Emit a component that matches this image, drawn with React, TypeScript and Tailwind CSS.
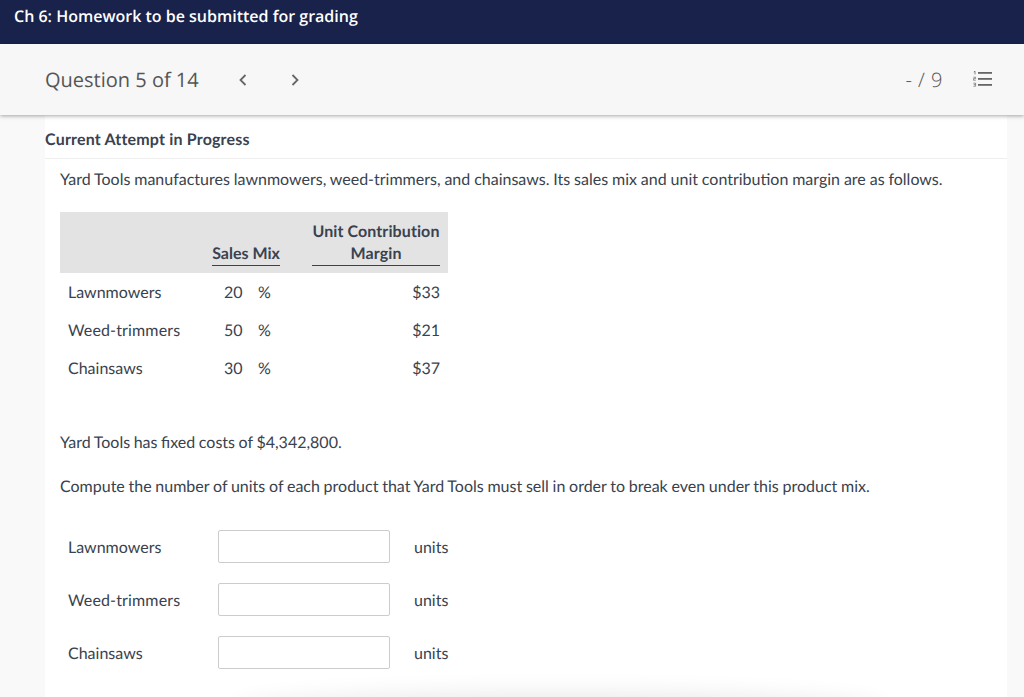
export default function App() {
  const rows = [
    ["Lawnmowers", "20", "$33", ""],
    ["Weed-trimmers", "50", "$21", "tracking-[0.15px]"],
    ["Chainsaws", "30", "$37", ""],
  ];
  return (
    <div className="relative h-[697px] w-[1024px] overflow-hidden bg-[#f9f9f9] font-['Lato',sans-serif] text-[16px] text-[#39424e] [text-rendering:geometricPrecision]">
      <header className="flex h-[44px] items-start bg-[#19224a] pl-[14px] pt-[5px] font-['Open_Sans',sans-serif] text-[16px] font-semibold leading-[22px] text-white">
        Ch 6: Homework to be submitted for grading
      </header>
      <div className="relative z-10 flex h-[71px] items-center bg-[#f7f7f7] pl-[45px] pr-[31px] font-['Open_Sans',sans-serif] text-[#555] shadow-[0_1px_4px_rgba(0,0,0,0.35)]">
        <span className="w-[193px] text-[20px]">Question 5 of 14</span>
        <svg width="10" height="14" viewBox="0 0 10 14" fill="none" stroke="#666" strokeWidth="1.8" className="mr-[42px]">
          <path d="M7.5 2 L2.5 7 L7.5 12" />
        </svg>
        <svg width="10" height="14" viewBox="0 0 10 14" fill="none" stroke="#666" strokeWidth="1.8">
          <path d="M2.5 2 L7.5 7 L2.5 12" />
        </svg>
        <span className="ml-auto text-[20px] font-light tracking-[0.5px]">- / 9</span>
        <svg width="20" height="16" viewBox="0 0 20 16" className="ml-[30px] mb-[1px]" fill="#666">
          <rect x="5" y="1" width="14" height="1.8" />
          <rect x="5" y="7" width="14" height="1.8" />
          <rect x="5" y="13" width="14" height="1.8" />
          <path d="M0.8 1 L2 0.2 V3.4" fill="none" stroke="#666" strokeWidth="0.8" />
          <path d="M0.4 6.2 H2.6 V7.6 H0.4 V9.2 H2.8" fill="none" stroke="#666" strokeWidth="0.7" />
          <path d="M0.4 12.2 H2.6 V13.6 H0.8 M2.6 13.6 V15.2 H0.4" fill="none" stroke="#666" strokeWidth="0.7" />
        </svg>
      </div>
      <main className="ml-[45px] mr-[17px] h-[582px] bg-white">
        <div className="flex h-[44px] items-end border-b border-[#eeeeee] pb-[8px] font-bold leading-[20px] tracking-[0.19px]">
          Current Attempt in Progress
        </div>
        <div className="pl-[15px]">
          <p className="mt-[11px] leading-[20px] [word-spacing:-0.23px]">
            Yard Tools manufactures lawnmowers, weed-trimmers, and chainsaws. Its sales mix and unit contribution margin are as follows.
          </p>
          <table className="mt-[22px] w-[388px] border-collapse">
            <thead>
              <tr className="h-[61px] bg-[#e3e3e3] font-bold">
                <th className="w-[152px]"></th>
                <th className="w-[68px] p-0 align-bottom">
                  <span className="mb-[7px] block border-b border-[#39424e] text-center font-bold leading-[22px]">Sales Mix</span>
                </th>
                <th className="w-[32px]"></th>
                <th className="w-[128px] p-0 align-bottom">
                  <span className="mb-[7px] block border-b border-[#39424e] text-center font-bold leading-[22px] tracking-[0.1px]">
                    Unit Contribution<br />Margin
                  </span>
                </th>
                <th className="w-[8px]"></th>
              </tr>
            </thead>
            <tbody>
              {rows.map((r) => (
                <tr key={r[0]} className="h-[38px]">
                  <td className={`pl-[8px] pt-[2px] pb-0 ${r[3]}`}>{r[0]}</td>
                  <td className="p-0 pl-[12px] pt-[2px]">
                    <span className="inline-block w-[34px]">{r[1]}</span>%
                  </td>
                  <td></td>
                  <td className="p-0 pt-[2px] text-right">{r[2]}</td>
                  <td></td>
                </tr>
              ))}
            </tbody>
          </table>
          <p className="mt-[46px] leading-[20px] [word-spacing:-0.5px]">Yard Tools has fixed costs of $4,342,800.</p>
          <p className="mt-[24px] leading-[20px] [word-spacing:-0.37px]">
            Compute the number of units of each product that Yard Tools must sell in order to break even under this product mix.
          </p>
          <div className="mt-[33px] flex flex-col gap-[20px]">
            {rows.map((r) => (
              <div key={r[0]} className="flex h-[33px] items-center pl-[8px]">
                <span className={`w-[150px] pt-[2px] ${r[3]}`}>{r[0]}</span>
                <input
                  aria-label={r[0]}
                  className="h-[33px] w-[172px] rounded-[2px] border border-[#cccccc] bg-white"
                />
                <span className="ml-[24px] pt-[2px]">units</span>
              </div>
            ))}
          </div>
        </div>
      </main>
      <div className="absolute left-[240px] top-[702px] h-[20px] w-[640px] rounded-[50%] shadow-[0_0_24px_8px_rgba(0,0,0,0.09)]"></div>
    </div>
  );
}
